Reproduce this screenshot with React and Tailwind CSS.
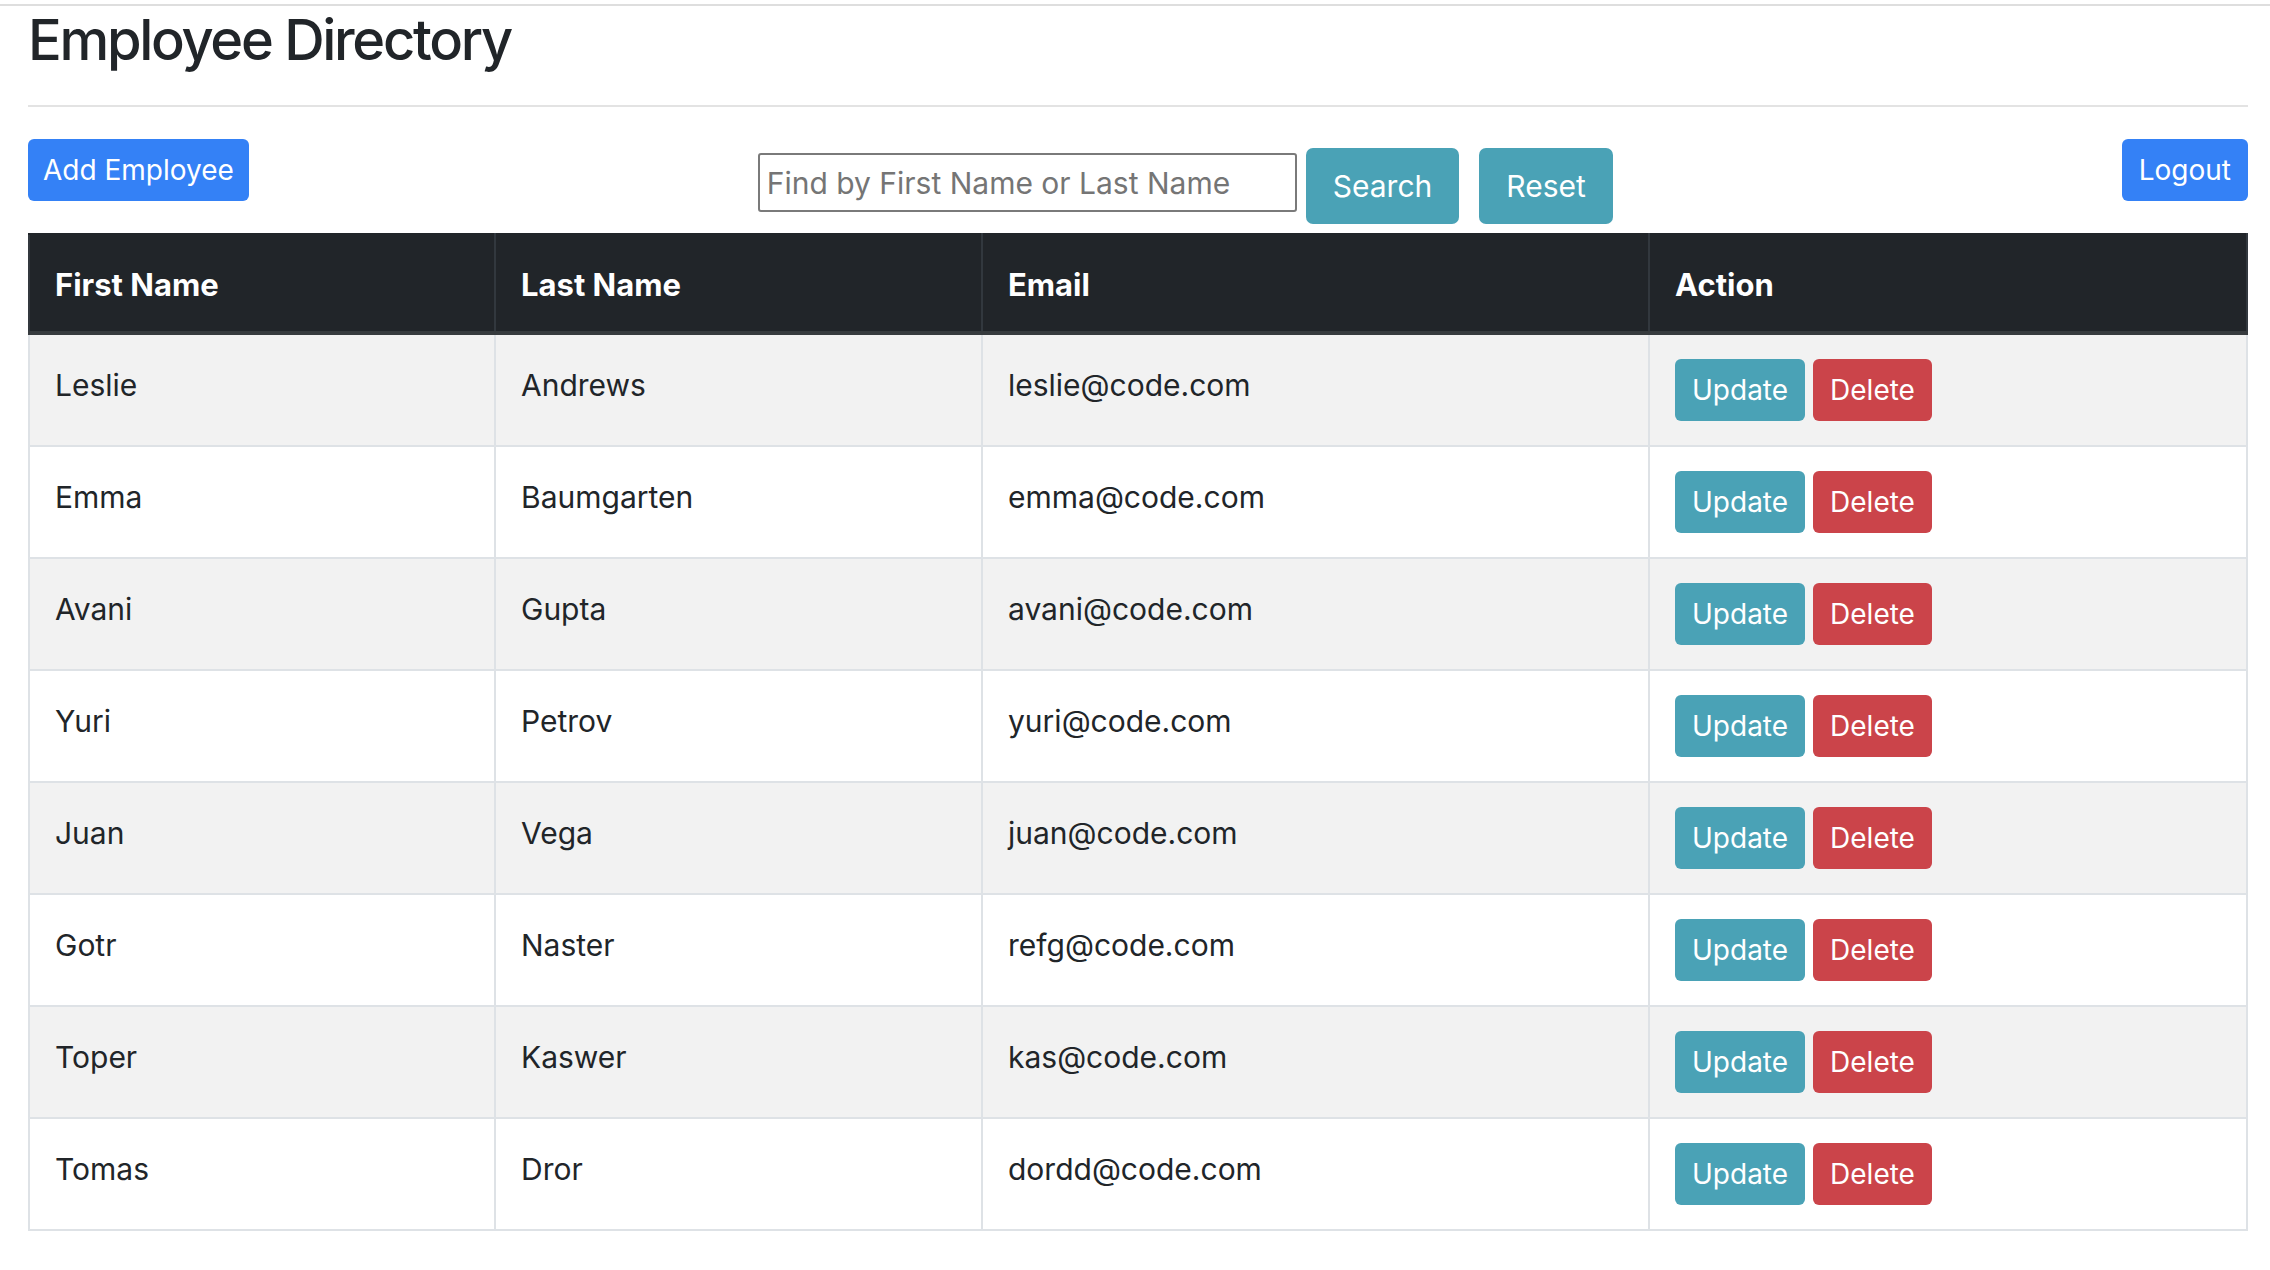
import { useState } from "react";

const employees = [
  { id: 1, firstName: "Leslie", lastName: "Andrews", email: "leslie@code.com" },
  { id: 2, firstName: "Emma", lastName: "Baumgarten", email: "emma@code.com" },
  { id: 3, firstName: "Avani", lastName: "Gupta", email: "avani@code.com" },
  { id: 4, firstName: "Yuri", lastName: "Petrov", email: "yuri@code.com" },
  { id: 5, firstName: "Juan", lastName: "Vega", email: "juan@code.com" },
  { id: 6, firstName: "Gotr", lastName: "Naster", email: "refg@code.com" },
  { id: 7, firstName: "Toper", lastName: "Kaswer", email: "kas@code.com" },
  { id: 8, firstName: "Tomas", lastName: "Dror", email: "dordd@code.com" },
];

export default function App() {
  const [query, setQuery] = useState("");

  const thClass =
    "border-2 border-[#32383e] border-t-[#212529] border-b-4 border-b-[#373b3e] px-[25px] pt-[27px] pb-[24px] text-left text-[31px] font-bold leading-[45px] text-white";
  const tdClass =
    "border-2 border-[#dee2e6] px-[25px] py-[24px] align-top text-[30px] leading-[53px]";

  return (
    <div className="min-h-screen bg-white font-['Inter',sans-serif] text-[#212529]">
      <div className="pt-[4px]">
        <div className="h-[2px] bg-[#dedede]" />
      </div>

      <div className="ml-[28px] w-[2220px]">
        <h1 className="mt-[6px] text-[56px] font-medium leading-[57px] tracking-[-2.3px]">
          Employee Directory
        </h1>
        <div className="mt-[36px] h-[2px] bg-[#e3e3e3]" />

        {/* toolbar */}
        <div className="mt-[32px] flex items-start justify-between">
          <button className="h-[62px] rounded-[6px] bg-[#3481f6] px-[15px] text-[28px] text-white">
            Add Employee
          </button>

          <div className="mt-[9px] flex items-start">
            <input
              value={query}
              onChange={(e) => setQuery(e.target.value)}
              placeholder="Find by First Name or Last Name"
              className="mt-[5px] h-[59px] w-[539px] rounded-[3px] border-2 border-[#7a7a7a] px-[7px] text-[30px] outline-none placeholder:text-[#757575]"
            />
            <button className="ml-[9px] h-[76px] rounded-[7px] bg-[#4aa2b6] px-[27px] text-[30px] text-white">
              Search
            </button>
            <button className="ml-[20px] h-[76px] rounded-[7px] bg-[#4aa2b6] px-[27px] text-[30px] text-white">
              Reset
            </button>
          </div>

          <button className="h-[62px] rounded-[6px] bg-[#3481f6] px-[17px] text-[28px] text-white">
            Logout
          </button>
        </div>

        {/* table */}
        <table className="mt-[9px] w-[2220px] table-fixed border-collapse">
          <thead className="bg-[#212529]">
            <tr>
              <th className={`${thClass} w-[466px]`}>First Name</th>
              <th className={`${thClass} w-[487px]`}>Last Name</th>
              <th className={`${thClass} w-[667px]`}>Email</th>
              <th className={thClass}>Action</th>
            </tr>
          </thead>
          <tbody>
            {employees.map((emp, i) => (
              <tr key={emp.id} className={i % 2 === 0 ? "bg-[#f2f2f2]" : "bg-white"}>
                <td className={tdClass}>{emp.firstName}</td>
                <td className={tdClass}>{emp.lastName}</td>
                <td className={tdClass}>{emp.email}</td>
                <td className={tdClass}>
                  <div className="flex gap-[8px]">
                    <button className="h-[62px] rounded-[6px] bg-[#4aa2b6] px-[17px] text-[28px] leading-[62px] text-white">
                      Update
                    </button>
                    <button className="h-[62px] rounded-[6px] bg-[#cb444a] px-[17px] text-[28px] leading-[62px] text-white">
                      Delete
                    </button>
                  </div>
                </td>
              </tr>
            ))}
          </tbody>
        </table>
      </div>
    </div>
  );
}
